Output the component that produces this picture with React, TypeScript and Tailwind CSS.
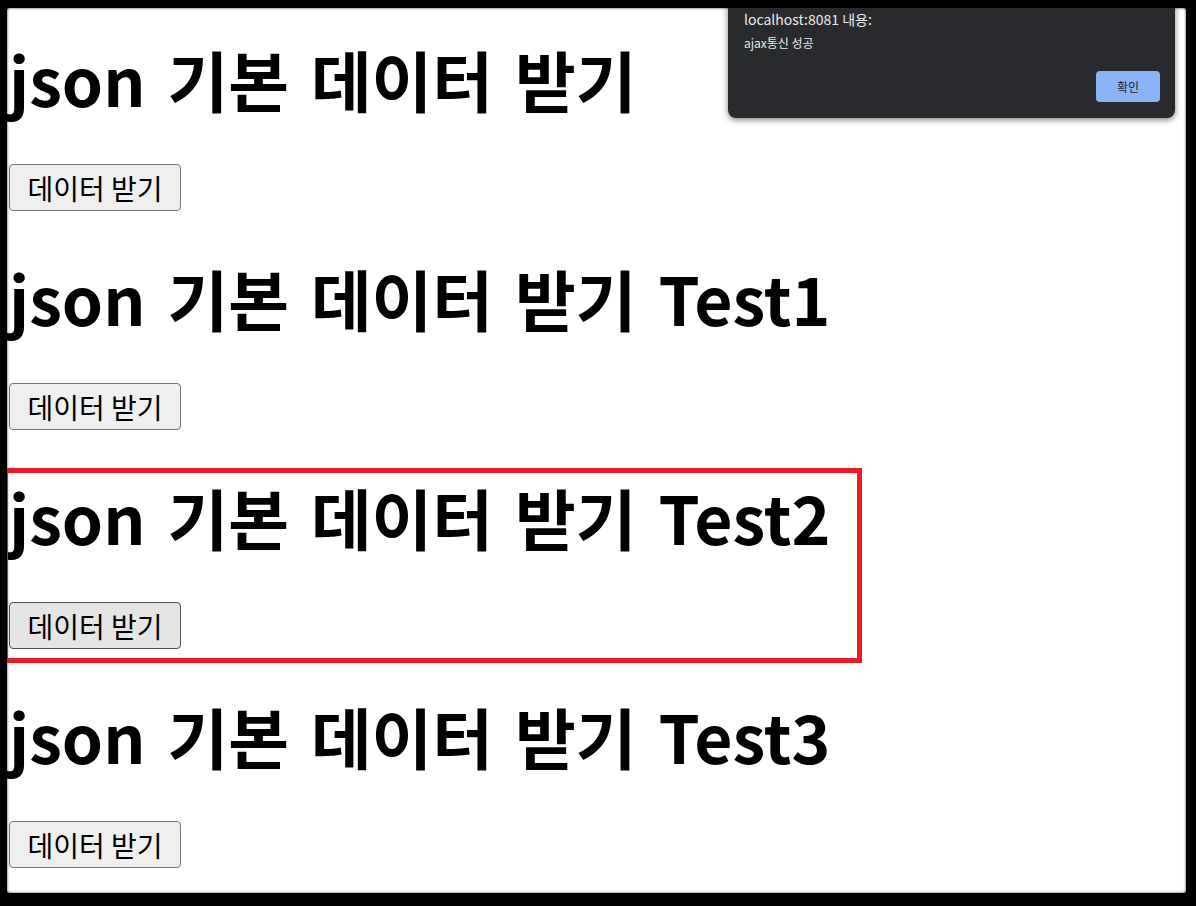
import React from 'react';

const FONT = "font-['Noto_Sans_CJK_KR','Noto_Sans',sans-serif]";

const sections = [
  { title: 'json 기본 데이터 받기', hover: false },
  { title: 'json 기본 데이터 받기 Test1', hover: false },
  { title: 'json 기본 데이터 받기 Test2', hover: true },
  { title: 'json 기본 데이터 받기 Test3', hover: false },
];

export default function App() {
  return (
    <div className={`w-[1196px] h-[906px] bg-black pl-[7px] pt-[8px] ${FONT}`}>
      <div className="relative w-[1179px] h-[885px] bg-white overflow-hidden rounded-[3px] shadow-[inset_0_0_2px_1px_rgba(0,0,0,0.35)]">
        {/* page content */}
        <div className="pt-[30px] pl-[2px]">
          {sections.map((s) => (
            <section key={s.title} className="flex flex-col items-start">
              <h1 className="h-[80px] leading-[80px] text-[66px] font-semibold text-black whitespace-nowrap [word-spacing:7px]">
                {s.title}
              </h1>
              <button
                className={`mt-[46px] mb-[46px] h-[47px] w-[172px] rounded-[4px] border text-[28px] leading-none text-black ${
                  s.hover ? 'bg-[#e5e5e5] border-[#4f4f4f]' : 'bg-[#efefef] border-[#767676]'
                }`}
              >
                데이터 받기
              </button>
            </section>
          ))}
        </div>

        {/* red highlight annotation */}
        <div className="absolute left-[-4px] top-[460px] w-[859px] h-[195px] border-[5px] border-[#ed1c24]" />

        {/* browser alert dialog */}
        <div className="absolute left-[721px] top-[-10px] w-[447px] h-[120px] bg-[#292a2d] rounded-b-[8px] shadow-[0_2px_6px_rgba(0,0,0,0.5)] text-[#e8eaed]">
          <div className="pl-[16px] pt-[11px] text-[14px] leading-[20px]">localhost:8081 내용:</div>
          <div className="pl-[16px] pt-[6px] text-[12px] leading-[16px]">ajax통신 성공</div>
          <div className="flex justify-end pr-[15px] pt-[20px]">
            <button className="w-[64px] h-[31px] rounded-[4px] bg-[#8ab4f8] text-[#202124] text-[12px]">확인</button>
          </div>
        </div>
      </div>
    </div>
  );
}
